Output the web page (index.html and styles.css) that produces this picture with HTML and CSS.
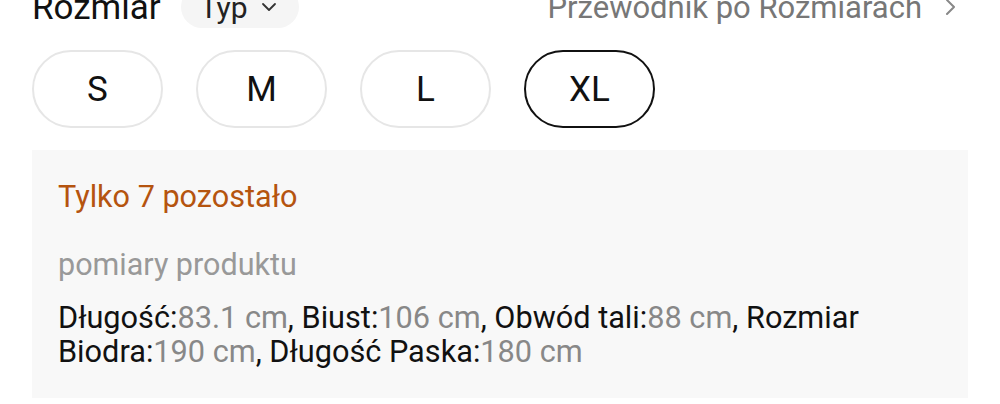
FILE: index.html
```html
<!DOCTYPE html>
<html>
<head>
  <meta charset="utf-8">
  <meta name="viewport" content="width=device-width, initial-scale=1">
  <title>Rozmiar</title>
  <link rel="stylesheet" href="styles.css">
</head>
<body>

  <div class="size-panel">
    <!-- Naglowek: rozmiar, typ i przewodnik -->
    <div class="size-head">
      <div class="size-head-left">
        <span class="size-title">Rozmiar</span>
        <span class="type-pill">Typ
          <svg class="chev-down" width="16" height="10" viewBox="0 0 16 10"><path d="M2 2l6 6 6-6" fill="none" stroke="#333" stroke-width="1.8" stroke-linecap="round" stroke-linejoin="round"/></svg>
        </span>
      </div>
      <a class="size-guide">Przewodnik po Rozmiarach
        <svg class="chev-right" width="12" height="18" viewBox="0 0 12 18"><path d="M3 2l7 7-7 7" fill="none" stroke="#888" stroke-width="2" stroke-linecap="round" stroke-linejoin="round"/></svg>
      </a>
    </div>

    <!-- Lista rozmiarow -->
    <div class="size-list">
      <button class="size-btn">S</button>
      <button class="size-btn">M</button>
      <button class="size-btn">L</button>
      <button class="size-btn active">XL</button>
    </div>

    <!-- Informacje o produkcie -->
    <div class="size-info">
      <p class="stock">Tylko 7 pozostało</p>
      <p class="info-title">pomiary produktu</p>
      <p class="measures">
        Długość:<span class="val">83.1 cm</span>, Biust:<span class="val">106 cm</span>, Obwód tali:<span class="val">88 cm</span>, Rozmiar Biodra:<span class="val">190 cm</span>, Długość Paska:<span class="val">180 cm</span>
      </p>
    </div>
  </div>

</body>
</html>
```

FILE: styles.css
```css
body {
  background: #ffffff;
  color: #111111;
  font-family: Roboto, "Noto Sans", Arial, sans-serif;
  margin: 0;
  padding: 0;
}
.size-panel {
  padding: 0 32px;
}
.size-head {
  display: flex;
  justify-content: space-between;
  align-items: center;
  height: 42px;
  margin-top: -14px;
}
.size-head-left {
  display: flex;
  align-items: center;
  gap: 20px;
}
.size-title {
  font-size: 35px;
  color: #111;
}
.type-pill {
  display: flex;
  align-items: center;
  gap: 13px;
  height: 42px;
  padding: 0 22px 0 19px;
  border-radius: 21px;
  background: #f5f5f5;
  font-size: 30px;
  color: #222;
}
.size-guide {
  display: flex;
  align-items: center;
  gap: 22px;
  font-size: 31px;
  color: #777;
  padding-right: 12px;
}
.size-list {
  display: flex;
  gap: 33px;
  margin-top: 22px;
}
.size-btn {
  width: 131px;
  height: 78px;
  border: 2px solid #e6e6e6;
  border-radius: 39px;
  background: #fff;
  font-family: inherit;
  font-size: 35px;
  color: #111;
  padding: 0;
}
.size-btn.active {
  border: 2.5px solid #111;
}
.size-info {
  background: #f8f8f8;
  margin-top: 22px;
  padding: 26px 26px 28px;
  height: 248px;
  box-sizing: border-box;
}
.size-info p {
  margin: 0;
}
.stock {
  font-size: 30.6px;
  color: #b5540f;
  line-height: 42px;
}
.info-title {
  font-size: 30.5px;
  color: #999;
  margin-top: 27px !important;
  line-height: 40px;
}
.measures {
  font-size: 30.7px;
  line-height: 34px;
  margin-top: 16px !important;
  color: #111;
}
.val {
  color: #888;
}
```
